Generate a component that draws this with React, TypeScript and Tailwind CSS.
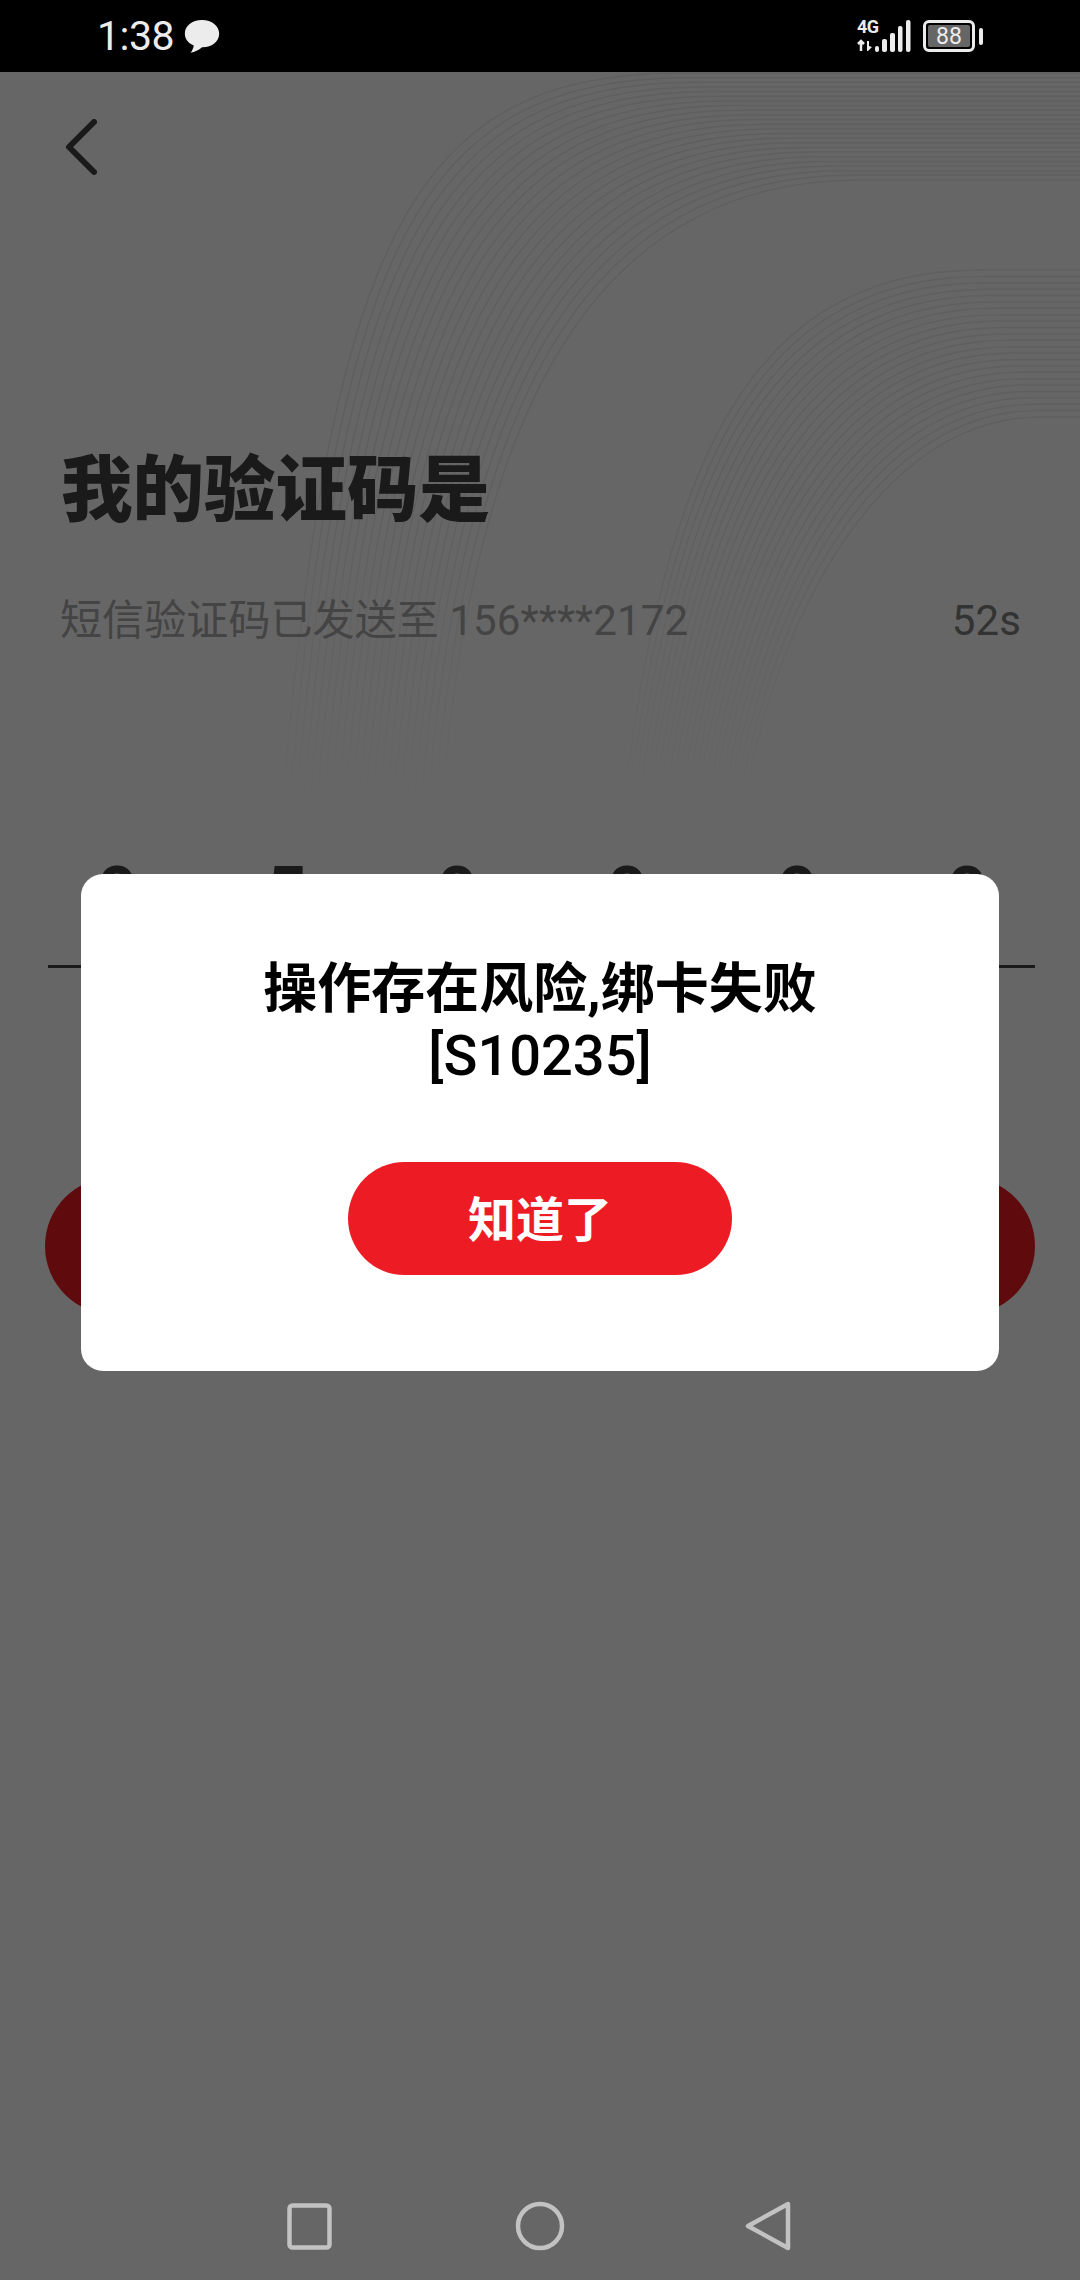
const sans = "font-['Roboto','Noto_Sans_CJK_SC',sans-serif]";

const lerp = (a: number, b: number, t: number) => Math.round((a + (b - a) * t) * 10) / 10;

// one set of concentric lines, bent between an outer and an inner curve
function Waves({ outer, inner, count }: { outer: number[]; inner: number[]; count: number }) {
	const lines = [];
	for (let i = 0; i < count; i++) {
		const p = outer.map((v, k) => lerp(v, inner[k], i / (count - 1)));
		lines.push(
			<path
				key={i}
				d={`M${p[0]} ${p[1]}C${p[2]} ${p[3]} ${p[4]} ${p[5]} ${p[6]} ${p[7]}L1080 ${p[7]}`}
			/>
		);
	}
	return <g>{lines}</g>;
}

function WaveBackground() {
	return (
		<svg className="absolute left-0 top-[72px]" width="1080" height="760" viewBox="0 72 1080 760" fill="none">
			<defs>
				<linearGradient id="fade" gradientUnits="userSpaceOnUse" x1="0" y1="72" x2="0" y2="830">
					<stop offset="0" stopColor="#fff" />
					<stop offset="0.55" stopColor="#fff" />
					<stop offset="1" stopColor="#000" />
				</linearGradient>
				<mask id="fadeMask" maskUnits="userSpaceOnUse" x="0" y="72" width="1080" height="760">
					<rect x="0" y="72" width="1080" height="760" fill="url(#fade)" />
				</mask>
			</defs>
			<g mask="url(#fadeMask)" stroke="#5a4a4a" strokeOpacity="0.1" strokeWidth="1.5">
				<Waves outer={[280, 830, 330, 240, 410, 73, 680, 73]} inner={[440, 830, 470, 400, 600, 180, 860, 180]} count={24} />
				<Waves outer={[620, 830, 660, 500, 730, 270, 980, 270]} inner={[740, 830, 770, 620, 880, 417, 1040, 417]} count={24} />
			</g>
		</svg>
	);
}

function StatusBar() {
	return (
		<div className="relative z-20 flex h-[72px] shrink-0 items-center justify-between bg-black pl-[97px] pr-[97px] text-[#ececec]">
			<div className="flex items-center gap-[10px]">
				<span className={`${sans} text-[41px] leading-none tracking-[-0.5px]`}>1:38</span>
				<svg width="36" height="35" viewBox="0 0 34 33">
					<path d="M17 1C7.6 1 .8 6.6.8 13.8c0 5 3.300 9.100 8.400 11.100-.3 2.400-1.500 4.800-3 7 3.800-.6 8-2.800 10.800-5.300h.5c9.400 0 15.700-5.700 15.700-12.800S26.400 1 17 1Z" fill="#ececec" />
				</svg>
			</div>
			<div className="flex items-center">
				<div className="relative h-[34px] w-[54px]">
					<span className={`${sans} absolute left-0 top-[-3px] text-[18px] font-bold leading-[22px] tracking-[-0.5px]`}>4G</span>
					<svg className="absolute left-0 top-0" width="54" height="34" viewBox="0 0 54 34">
						<g stroke="#ececec" strokeWidth="2.500" fill="none">
							<path d="M4 32V22M1 25l3-3 3 3" />
						</g>
						<path d="M10 32v-10h2v5l3 1-4 4Z" fill="#ececec" />
						<g fill="#ececec">
							<rect x="18" y="27" width="4" height="6" rx="2" />
							<rect x="25" y="20" width="5" height="13" rx="2" />
							<rect x="33" y="14" width="5" height="19" rx="2" />
							<rect x="41" y="7" width="4.500" height="26" rx="2" />
							<rect x="49" y="1" width="4.500" height="32" rx="2" />
						</g>
					</svg>
				</div>
				<div className="ml-[12px] flex h-[32px] w-[52px] items-center justify-center rounded-[6px] border-[3px] border-[#ececec] p-[2px]">
					<div className={`${sans} flex h-full w-full items-center justify-center rounded-[2px] bg-[#666] text-[23px] leading-none`}>88</div>
				</div>
				<div className="ml-[4px] h-[17px] w-[4px] rounded-full bg-[#ececec]" />
			</div>
		</div>
	);
}

function NavBar() {
	return (
		<div className="mt-auto flex h-[77px] items-start pl-[287px]">
			<svg width="46" height="47" viewBox="0 0 46 47" fill="none" stroke="#c2c2c2" strokeWidth="4.500">
				<rect x="2.500" y="2.500" width="40" height="42" rx="3" />
			</svg>
			<svg className="ml-[182px] -mt-[2px]" width="50" height="50" viewBox="0 0 50 50" fill="none" stroke="#c2c2c2" strokeWidth="4.500">
				<circle cx="25" cy="25" r="22" />
			</svg>
			<svg className="ml-[180px] -mt-[2px]" width="46" height="50" viewBox="0 0 46 50" fill="none" stroke="#c2c2c2" strokeWidth="4.500" strokeLinejoin="round">
				<path d="M43 3v44L3 25Z" />
			</svg>
		</div>
	);
}

export default function App() {
	const digits = ["0", "5", "0", "0", "0", "0"];

	return (
		<div className={`${sans} relative flex h-[2280px] w-[1080px] flex-col overflow-hidden bg-white`}>
			<StatusBar />
			<WaveBackground />

			<div className="relative flex flex-col">
				<div className="pl-[65px] pt-[47px]">
					<svg width="32" height="56" viewBox="0 0 32 56" fill="none" stroke="#414141" strokeWidth="6" strokeLinecap="round" strokeLinejoin="round">
						<path d="M29 3 4 28l25 25" />
					</svg>
				</div>
				<h1 className="mt-[266px] pl-[61px] text-[71.500px] font-black leading-[100px] text-[#414141]">我的验证码是</h1>
				<div className="mt-[50px] flex items-center justify-between pl-[60px] pr-[59px] text-[42px] leading-[60px] tracking-[0.1px] text-[#aaa]">
					<span>短信验证码已发送至 156****2172</span>
					<span className="text-[#808080]">52s</span>
				</div>
				<div className="mt-[201px] grid w-[1020px] translate-x-[32px] grid-cols-6">
					{digits.map((d, i) => (
						<span key={i} className="text-center text-[70px] font-bold leading-[80px] text-[#414141]">
							{d}
						</span>
					))}
				</div>
				<div className="ml-[48px] mr-[45px] mt-[33px] h-[3px] bg-[#414141]" />
				<div className="ml-[45px] mr-[45px] mt-[209px] h-[138px] rounded-full bg-[#ed1c24]" />
			</div>

			{/* dim layer with the dialog */}
			<div className="absolute inset-x-0 bottom-0 top-[72px] z-10 flex flex-col bg-black/60">
				<div className="ml-[81px] mt-[802px] flex h-[497px] w-[918px] flex-col items-center rounded-[22px] bg-white">
					<div className="mt-[83px] text-center text-black">
						<p className="text-[54px] font-bold leading-[66px]">操作存在风险,绑卡失败</p>
						<p className="text-[56px] font-medium leading-[66px]">[S10235]</p>
					</div>
					<button className="mt-[73px] h-[113px] w-[384px] rounded-full bg-[#ed1c24] pt-[4px] text-[48px] font-bold text-white">
						知道了
					</button>
				</div>
				<NavBar />
			</div>
		</div>
	);
}
